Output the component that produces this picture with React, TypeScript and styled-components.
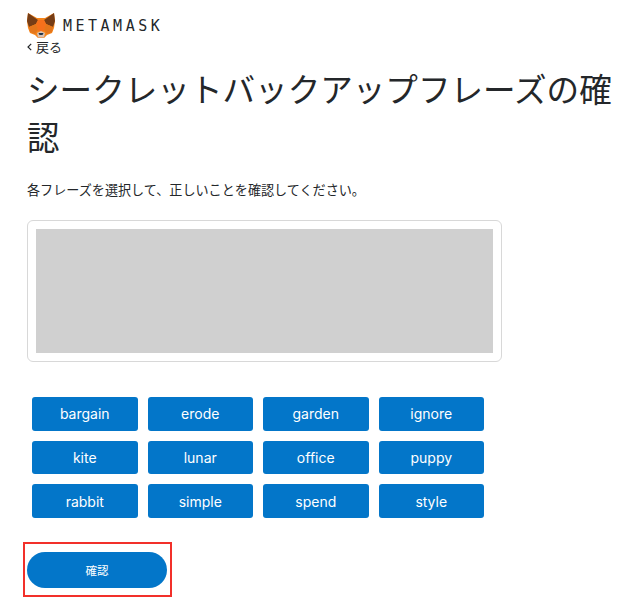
import React from 'react';
import styled, { createGlobalStyle } from 'styled-components';

const WORDS = ['bargain', 'erode', 'garden', 'ignore', 'kite', 'lunar', 'office', 'puppy', 'rabbit', 'simple', 'spend', 'style'];

const GlobalStyle = createGlobalStyle`
  html, body {
    margin: 0;
    padding: 0;
    background: #fff;
  }
  body {
    font-family: "Inter", "Noto Sans CJK JP", sans-serif;
    color: #24272a;
  }
`;

const FoxLogo = () => (
  <svg width="28" height="25" viewBox="0 0 28 25">
    <polygon points="1,0 10,5 18,5 27,0 28,8 27,15 25,20 20,22 17,25 11,25 8,22 3,20 1,15 0,8" fill="#f6851b" />
    <polygon points="1,0 11,7 9,11 2,14 0,8" fill="#763d16" />
    <polygon points="27,0 17,7 19,11 26,14 28,8" fill="#763d16" />
    <polygon points="11,7 17,7 19,11 17,18 11,18 9,11" fill="#f5701c" />
    <polygon points="2,14 9,11 11,17 8,21 3,19" fill="#e4761b" />
    <polygon points="26,14 19,11 17,17 20,21 25,19" fill="#e4761b" />
    <polygon points="10,20 14,18 18,20 17,24.5 11,24.5" fill="#d7c1b3" />
    <polygon points="11.5,20 16.5,20 15.5,22 12.5,22" fill="#233447" />
  </svg>
);

const Page = styled.div`
  width: 640px;
  height: 613px;
  box-sizing: border-box;
  padding: 13px 0 0 27px;
  overflow: hidden;
`;

const Brand = styled.div`
  display: flex;
  align-items: center;
  gap: 8px;
  height: 25px;
`;

const BrandName = styled.span`
  font-family: "DejaVu Sans Mono", monospace;
  font-size: 15px;
  letter-spacing: 3.5px;
  color: #24272a;
`;

const BackLink = styled.div`
  display: flex;
  align-items: center;
  gap: 4px;
  font-family: "Noto Sans CJK JP", sans-serif;
  font-size: 13px;
  line-height: 18px;
  color: #24272a;
`;

const BackChevron = () => (
  <svg width="5" height="8" viewBox="0 0 5 8">
    <path d="M4.2 0.8 L1 4 L4.2 7.2" fill="none" stroke="#24272a" strokeWidth="1.2" />
  </svg>
);

const Title = styled.h1`
  margin: 8px 0 0;
  width: 600px;
  font-family: "Noto Sans CJK JP", sans-serif;
  font-size: 32.6px;
  font-weight: 400;
  line-height: 48px;
  color: #24272a;
`;

const Subtitle = styled.p`
  margin: 20px 0 0;
  font-family: "Noto Sans CJK JP", sans-serif;
  font-size: 13.1px;
  line-height: 19px;
  color: #24272a;
`;

const PhraseBox = styled.div`
  box-sizing: border-box;
  width: 475px;
  height: 142px;
  margin-top: 21px;
  padding: 8px;
  border: 1px solid #d8d8d8;
  border-radius: 6px;
`;

const PhraseMask = styled.div`
  height: 100%;
  background: #d0d0d0;
`;

const WordGrid = styled.div`
  display: grid;
  grid-template-columns: repeat(4, 105.5px);
  grid-auto-rows: 33.7px;
  column-gap: 10px;
  row-gap: 10px;
  margin: 35px 0 0 5px;
`;

const WordButton = styled.button`
  border: 0;
  padding: 0;
  border-radius: 3px;
  background: #0376c9;
  color: #fff;
  font-family: "Inter", sans-serif;
  font-size: 14px;
  font-weight: 400;
`;

const ConfirmHighlight = styled.div`
  box-sizing: border-box;
  width: 149px;
  height: 55px;
  margin: 24px 0 0 -4px;
  padding: 8px 0 0 2px;
  border: 2px solid #f2302a;
`;

const ConfirmButton = styled.button`
  display: block;
  width: 140px;
  height: 36px;
  border: 0;
  padding: 0;
  border-radius: 18px;
  background: #0376c9;
  color: #fff;
  font-family: "Noto Sans CJK JP", sans-serif;
  font-size: 11.5px;
`;

const App = () => {
  return (
    <Page>
      <GlobalStyle />
      <Brand>
        <FoxLogo />
        <BrandName>METAMASK</BrandName>
      </Brand>
      <BackLink>
        <BackChevron />
        戻る
      </BackLink>
      <Title>シークレットバックアップフレーズの確認</Title>
      <Subtitle>各フレーズを選択して、正しいことを確認してください。</Subtitle>
      <PhraseBox>
        <PhraseMask />
      </PhraseBox>
      <WordGrid>
        {WORDS.map((word) => (
          <WordButton key={word}>{word}</WordButton>
        ))}
      </WordGrid>
      <ConfirmHighlight>
        <ConfirmButton>確認</ConfirmButton>
      </ConfirmHighlight>
    </Page>
  );
};

export default App;
